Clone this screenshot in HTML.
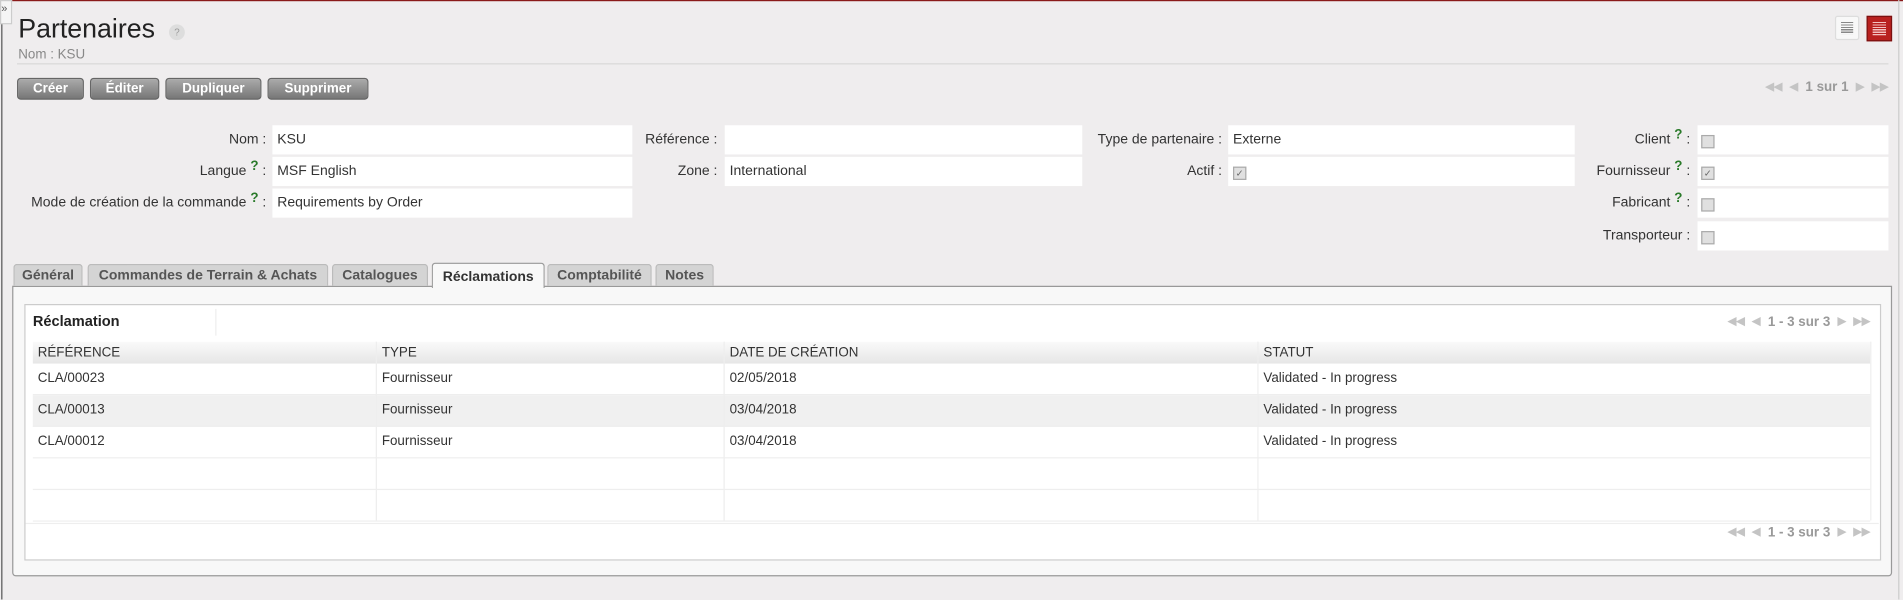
<!DOCTYPE html>
<html><head><meta charset="utf-8"><style>
html,body{margin:0;padding:0;width:1903px;height:599px;overflow:hidden;background:#efedee;font-family:"Liberation Sans",Arial,sans-serif;}
#w{position:absolute;left:0;top:0;width:1565px;height:493px;transform:scale(1.2160);transform-origin:0 0;}
.a{position:absolute;}
.btn{position:absolute;top:64px;height:16px;border:1px solid #666;border-radius:3px;background:linear-gradient(#aaa,#777);color:#fff;font-weight:bold;font-size:11px;line-height:16px;text-align:center;}
.lab{position:absolute;font-size:11.5px;color:#333;text-align:right;line-height:24px;height:24px;}
.inp{position:absolute;background:#fff;height:24px;font-size:11.5px;color:#333;line-height:24px;padding-left:4px;box-sizing:border-box;}
.q{color:#2a7a2a;font-weight:bold;font-size:11px;position:relative;top:-4px;line-height:0;}
.cb{position:absolute;width:9px;height:9px;border:1px solid #aaa;background:#e0e0e0;font-size:8px;line-height:9px;text-align:center;color:#666;}
.tab{position:absolute;top:217px;height:18px;background:#d4d4d4;border:1px solid #bbb;border-bottom:none;border-radius:3px 3px 0 0;font-size:11.5px;font-weight:bold;color:#555;line-height:18px;text-align:center;box-sizing:border-box;}
.pg{position:absolute;font-size:11px;font-weight:bold;color:#999;white-space:nowrap;}
.pg i{font-style:normal;font-size:9px;color:#c4c4c4;vertical-align:1px;margin:0 3px;}
.row{position:absolute;left:27px;width:1511px;height:25px;border-bottom:1px solid #eee;font-size:11px;color:#333;line-height:25px;}
.row span{position:absolute;}
.vl{position:absolute;top:281px;width:1px;height:147px;background:#eee;}
</style></head><body><div id="w">
<div class="a" style="left:0;top:0;width:1565px;height:1px;background:#8a1a1a"></div>
<div class="a" style="left:0;top:0;width:8px;height:18px;background:#f5f5f5;border:1px solid #ccc;font-size:9px;color:#555;line-height:12px">»</div>
<div class="a" style="left:1px;top:20px;width:1px;height:473px;background:#555"></div>
<div class="a" style="left:1561px;top:0;width:1px;height:493px;background:#ccc"></div>
<div class="a" style="left:15px;top:11px;font-size:22px;color:#222">Partenaires</div>
<div class="a" style="left:139px;top:20px;width:13px;height:13px;border-radius:50%;background:#ddd;color:#999;font-size:8px;text-align:center;line-height:13px">?</div>
<div class="a" style="left:15px;top:39px;font-size:11px;color:#888">Nom : KSU</div>
<div class="a" style="left:14px;top:52px;width:1539px;height:1px;background:#d8d8d8"></div>
<div class="a" style="left:1509px;top:13px;width:18px;height:18px;border:1px solid #ddd;border-radius:2px;background:#f8f8f8">
<div class="a" style="left:4px;top:4px;width:10px;height:10px;background:repeating-linear-gradient(#888 0 1px,transparent 1px 2px)"></div></div>
<div class="a" style="left:1535px;top:13px;width:19px;height:19px;background:#b8201f;border:1px solid #7a1010">
<div class="a" style="left:4px;top:4px;width:11px;height:11px;background:repeating-linear-gradient(#f3c0c0 0 1px,transparent 1px 2px)"></div></div>
<div class="btn" style="left:14px;width:53px">Créer</div>
<div class="btn" style="left:74px;width:55px">Éditer</div>
<div class="btn" style="left:136px;width:77px">Dupliquer</div>
<div class="btn" style="left:220px;width:81px">Supprimer</div>
<div class="pg" style="right:9px;top:66px"><i>◀◀</i><i>◀</i> 1 sur 1 <i>▶</i><i>▶▶</i></div>

<div class="lab" style="left:0;width:219px;top:103px">Nom :</div>
<div class="inp" style="left:224px;width:296px;top:103px">KSU</div>
<div class="lab" style="left:0;width:219px;top:129px">Langue <span class="q">?</span> :</div>
<div class="inp" style="left:224px;width:296px;top:129px">MSF English</div>
<div class="lab" style="left:0;width:219px;top:155px">Mode de création de la commande <span class="q">?</span> :</div>
<div class="inp" style="left:224px;width:296px;top:155px">Requirements by Order</div>
<div class="lab" style="left:400px;width:190px;top:103px">Référence :</div>
<div class="inp" style="left:596px;width:294px;top:103px"></div>
<div class="lab" style="left:400px;width:190px;top:129px">Zone :</div>
<div class="inp" style="left:596px;width:294px;top:129px">International</div>
<div class="lab" style="left:800px;width:205px;top:103px">Type de partenaire :</div>
<div class="inp" style="left:1010px;width:285px;top:103px">Externe</div>
<div class="lab" style="left:800px;width:205px;top:129px">Actif :</div>
<div class="inp" style="left:1010px;width:285px;top:129px"></div><div class="cb" style="left:1014px;top:137px">✓</div>
<div class="lab" style="left:1200px;width:190px;top:103px">Client <span class="q">?</span> :</div>
<div class="lab" style="left:1200px;width:190px;top:129px">Fournisseur <span class="q">?</span> :</div>
<div class="lab" style="left:1200px;width:190px;top:155px">Fabricant <span class="q">?</span> :</div>
<div class="lab" style="left:1200px;width:190px;top:182px">Transporteur :</div>
<div class="inp" style="left:1396px;width:157px;top:103px"></div><div class="cb" style="left:1399px;top:111px"></div>
<div class="inp" style="left:1396px;width:157px;top:129px"></div><div class="cb" style="left:1399px;top:137px">✓</div>
<div class="inp" style="left:1396px;width:157px;top:155px"></div><div class="cb" style="left:1399px;top:163px"></div>
<div class="inp" style="left:1396px;width:157px;top:182px"></div><div class="cb" style="left:1399px;top:190px"></div>

<div class="a" style="left:10px;top:235px;width:1544px;height:237px;background:#f8f8f8;border:1px solid #999;border-radius:0 0 3px 3px"></div>
<div class="tab" style="left:11px;width:57px">Général</div>
<div class="tab" style="left:72px;width:198px">Commandes de Terrain &amp; Achats</div>
<div class="tab" style="left:273px;width:79px">Catalogues</div>
<div class="tab" style="left:355px;width:93px;top:216px;height:21px;background:#f8f8f8;border-color:#999;color:#333;line-height:22px">Réclamations</div>
<div class="tab" style="left:450px;width:86px">Comptabilité</div>
<div class="tab" style="left:539px;width:48px">Notes</div>

<div class="a" style="left:20px;top:250px;width:1525px;height:209px;background:#fff;border:1px solid #ccc"></div>
<div class="a" style="left:27px;top:257px;font-size:12px;font-weight:bold;color:#222">Réclamation</div>
<div class="a" style="left:177px;top:254px;width:1px;height:22px;background:#eee"></div>
<div class="pg" style="right:24px;top:259px"><i>◀◀</i><i>◀</i> 1 - 3 sur 3 <i>▶</i><i>▶▶</i></div>
<div class="a" style="left:27px;top:281px;width:1511px;height:18px;background:linear-gradient(#fafafa,#e6e6e6);font-size:11px;color:#333;line-height:18px">
<span class="a" style="left:4px">RÉFÉRENCE</span><span class="a" style="left:287px">TYPE</span><span class="a" style="left:573px">DATE DE CRÉATION</span><span class="a" style="left:1012px">STATUT</span></div>
<div class="row" style="top:299px"><span style="left:4px">CLA/00023</span><span style="left:287px">Fournisseur</span><span style="left:573px">02/05/2018</span><span style="left:1012px">Validated - In progress</span></div>
<div class="row" style="top:325px;background:#f0f0f0"><span style="left:4px">CLA/00013</span><span style="left:287px">Fournisseur</span><span style="left:573px">03/04/2018</span><span style="left:1012px">Validated - In progress</span></div>
<div class="row" style="top:351px"><span style="left:4px">CLA/00012</span><span style="left:287px">Fournisseur</span><span style="left:573px">03/04/2018</span><span style="left:1012px">Validated - In progress</span></div>
<div class="row" style="top:377px"></div>
<div class="row" style="top:403px"></div>
<div class="vl" style="left:309px"></div><div class="vl" style="left:595px"></div><div class="vl" style="left:1034px"></div><div class="vl" style="left:1538px"></div>
<div class="a" style="left:21px;top:430px;width:1524px;height:1px;background:#eee"></div>
<div class="pg" style="right:24px;top:432px"><i>◀◀</i><i>◀</i> 1 - 3 sur 3 <i>▶</i><i>▶▶</i></div>
</div></body></html>
